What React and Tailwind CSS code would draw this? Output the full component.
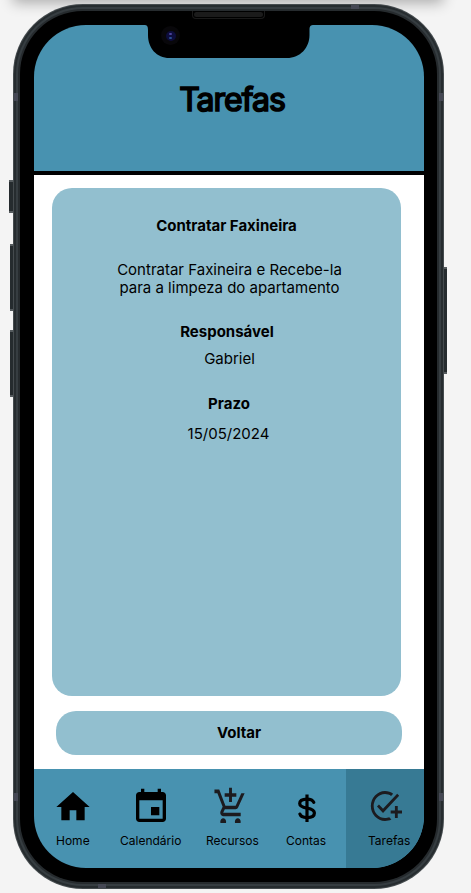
import React from "react";

const sans = "font-['Inter','Liberation_Sans',sans-serif]";

function HomeIcon() {
  return (
    <svg className="block h-10 w-10" viewBox="0 0 24 24" preserveAspectRatio="none">
      <path d="M10 20v-6h4v6h5v-8h3L12 3 2 12h3v8z" />
    </svg>
  );
}

function CalendarIcon() {
  return (
    <svg className="block h-10 w-10" viewBox="0 0 24 24">
      <path d="M17 12h-5v5h5v-5zM16 1v2H8V1H6v2H5c-1.11 0-1.99.9-1.99 2L3 19c0 1.1.89 2 2 2h14c1.1 0 2-.9 2-2V5c0-1.1-.9-2-2-2h-1V1h-2zm3 18H5V8h14v11z" />
    </svg>
  );
}

function CartIcon() {
  return (
    <svg className="block h-[37px] w-[35px] fill-[#1c1b1f]" viewBox="0 -960 960 829" preserveAspectRatio="none">
      <path d="M440-600v-120H320v-80h120v-120h80v120h120v80H520v120h-80ZM280-80q-33 0-56.500-23.500T200-160q0-33 23.500-56.500T280-240q33 0 56.500 23.500T360-160q0 33-23.500 56.500T280-80Zm400 0q-33 0-56.500-23.500T600-160q0-33 23.500-56.500T680-240q33 0 56.500 23.500T760-160q0 33-23.500 56.500T680-80ZM40-800v-80h131l170 360h280l156-280h91L692-482q-11 20-29.500 31T622-440H324l-44 80h480v80H280q-45 0-68.500-39t-1.500-79l54-98-144-304H40Z" />
    </svg>
  );
}

function MoneyIcon() {
  return (
    <svg className="block h-[28px] w-5 fill-none stroke-black" viewBox="0 0 20 28" strokeWidth="3.2">
      <path d="M10 0.400V28" />
      <path strokeLinecap="round" d="M16.800 8.400C15.800 6.200 14 5.100 10 5.100C5.500 5.100 2.700 6.800 2.700 9.500C2.700 12.300 5.500 13.300 10 14.100C14.500 14.900 17.400 16.100 17.400 19C17.400 22 14.500 23.600 10 23.600C6 23.600 3.700 22.600 2.900 20.100" />
    </svg>
  );
}

function TaskIcon() {
  return (
    <svg className="block h-9 w-[34px] fill-[#1c1b1f]" viewBox="0 -960 960 960" preserveAspectRatio="none">
      <path d="M480-80q-83 0-156-31.500T197-197q-54-54-85.500-127T80-480q0-83 31.500-156T197-763q54-54 127-85.500T480-880q65 0 123 19t107 53l-58 59q-38-24-81-37.500T480-800q-133 0-226.500 93.500T160-480q0 133 93.500 226.500T480-160q32 0 62-6t58-17l60 61q-41 20-86 31t-94 11Zm280-80v-120H640v-80h120v-120h80v120h120v80H840v120h-80ZM424-296 254-466l56-56 114 114 400-401 56 56-456 457Z" />
    </svg>
  );
}

function Tab({ className, iconClass, labelClass, icon, label }) {
  return (
    <div className={`flex h-full shrink-0 flex-col ${className}`}>
      <div className={`flex h-[64px] ${iconClass}`}>{icon}</div>
      <span className={`whitespace-nowrap text-[12px] leading-4 ${labelClass}`}>{label}</span>
    </div>
  );
}

function SideButton({ className }) {
  return (
    <div
      className={`absolute border-y-2 border-[#555b5e] bg-[#252b2e] ${className}`}
    />
  );
}

function Notch() {
  return (
    <>
      <svg className="absolute left-[144px] top-[24px] h-[35px] w-[170px]" viewBox="0 0 170 35">
        <path d="M0 0H170V1C166.500 1 165.500 2 165.500 6V11C165.500 24 156 34 143 34H25.500C12.500 34 4 24 4 11V6C4 2 3 1 0 1Z" fill="#000" />
      </svg>
      <div className="absolute left-[192px] top-[11px] h-[8px] w-[73px] rounded-b-[4px] border border-t-0 border-[#1a1a1a] bg-black" />
      <div className="absolute left-[194px] top-[12px] h-[5px] w-[69px] rounded-full bg-[#1b1b1b]" />
      <div className="absolute left-[161px] top-[26px] flex h-[19px] w-[19px] items-center justify-center rounded-full bg-[#08070a]">
        <div className="flex h-[10px] w-[10px] flex-col items-center justify-center gap-[2px] rounded-full bg-[#0d0d3c]">
          <div className="h-[2px] w-[3px] rounded-full bg-[#4b429b]" />
          <div className="h-[2px] w-[3px] rounded-full bg-[#284d91]" />
        </div>
      </div>
    </>
  );
}

export default function App() {
  return (
    <div className={`relative h-[893px] w-[471px] overflow-hidden bg-[#f4f4f4] text-black ${sans}`}>
      <div className="absolute -top-[20px] left-[14px] h-[20px] w-[428px] shadow-[0_2px_14px_1px_rgba(0,0,0,0.3)]" />
      <SideButton className="left-[9px] top-[180px] h-[33px] w-[5px]" />
      <SideButton className="left-[10px] top-[244px] h-[67px] w-[4px]" />
      <SideButton className="left-[10px] top-[330px] h-[67px] w-[4px]" />
      <SideButton className="left-[443px] top-[267px] h-[107px] w-[4px]" />

      <div className="absolute left-[13px] top-[4px] h-[885px] w-[431px] rounded-[70px] bg-[#454b4e] p-px">
        <div className="h-full w-full rounded-[69px] bg-[#262c2f] p-[2px]">
          <div className="h-full w-full rounded-[67px] bg-[#363d41] p-[2px]">
            <div className="h-full w-full rounded-[65px] bg-[#262b2e] p-[2px]">
              <div className="h-full w-full rounded-[63px] bg-black pl-[14px] pt-[14px]">
                <div className="flex h-[843px] w-[390px] flex-col overflow-hidden rounded-[52px]">
                  <header className="flex h-[150px] shrink-0 justify-center border-b-4 border-black bg-[#4892b0] pl-[6px] pt-[56px]">
                    <h1 className="text-[32px] font-normal leading-[38px] tracking-[-1px] [-webkit-text-stroke:1.7px_black]">Tarefas</h1>
                  </header>

                  <main className="flex h-[594px] shrink-0 flex-col bg-white pt-[13px]">
                    <section className="ml-[18px] flex h-[508px] w-[349px] flex-col items-center rounded-[20px] bg-[#92bfcf] pt-[29px] text-center text-[15px] leading-[18px]">
                      <h2 className="font-bold">Contratar Faxineira</h2>
                      <p className="mt-[26px] pl-[6px]">
                        Contratar Faxineira e Recebe-la
                        <br />
                        para a limpeza do apartamento
                      </p>
                      <h3 className="mt-[26px] pl-px font-bold">Responsável</h3>
                      <p className="mt-[9px] pl-[6px]">Gabriel</p>
                      <h3 className="mt-[27px] pl-[5px] font-bold">Prazo</h3>
                      <p className="mt-3 pl-[4px]">15/05/2024</p>
                    </section>
                    <button className="ml-[22px] mt-[15px] flex h-11 w-[346px] items-center justify-center rounded-[20px] bg-[#92bfcf] pl-[20px] text-[15px] font-bold leading-[18px]">
                      Voltar
                    </button>
                  </main>

                  <nav className="flex h-[99px] shrink-0 bg-[#4892b0]">
                    <Tab className="w-[78px]" iconClass="pl-[19px] pt-[18px]" labelClass="pl-[22px]" icon={<HomeIcon />} label="Home" />
                    <Tab className="w-[78px]" iconClass="pl-[19px] pt-[18px]" labelClass="pl-[8px]" icon={<CalendarIcon />} label="Calendário" />
                    <Tab className="w-[78px]" iconClass="pl-[23px] pt-[17px]" labelClass="pl-[16px]" icon={<CartIcon />} label="Recursos" />
                    <Tab className="w-[78px]" iconClass="pl-[29px] pt-[25px]" labelClass="pl-[18px]" icon={<MoneyIcon />} label="Contas" />
                    <Tab className="w-[78px] bg-[#377a94]" iconClass="pl-[22px] pt-[19px]" labelClass="pl-[22px]" icon={<TaskIcon />} label="Tarefas" />
                  </nav>
                </div>
              </div>
            </div>
          </div>
        </div>
      </div>

      <Notch />
      <div className="absolute left-[14px] top-[93px] h-[8px] w-[4px] bg-[#454854]" />
      <div className="absolute left-[439px] top-[93px] h-[8px] w-[4px] bg-[#454854]" />
      <div className="absolute left-[14px] top-[793px] h-[8px] w-[4px] bg-[#454854]" />
      <div className="absolute left-[439px] top-[793px] h-[8px] w-[4px] bg-[#454854]" />
      <div className="absolute left-[351px] top-[5px] h-[4px] w-[8px] bg-[#454854]" />
      <div className="absolute left-[98px] top-[884px] h-[4px] w-[8px] bg-[#454854]" />
    </div>
  );
}
